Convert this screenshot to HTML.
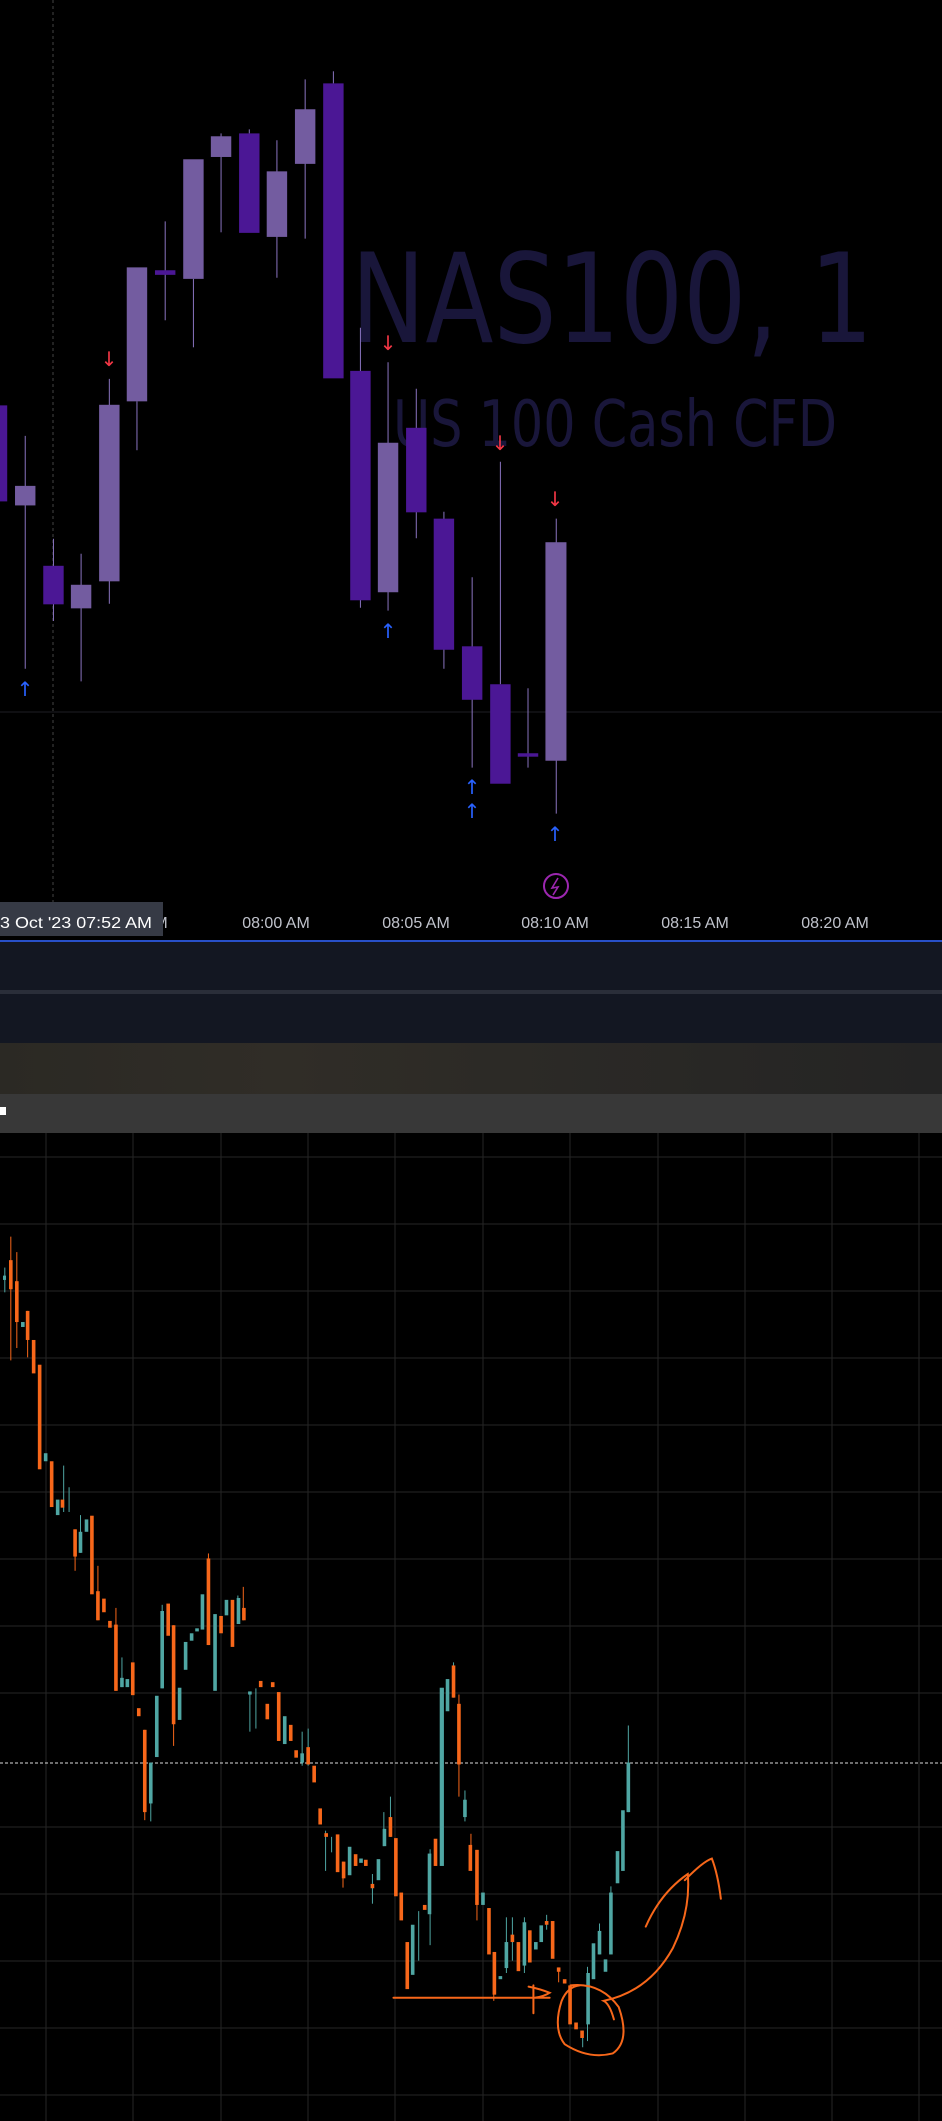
<!DOCTYPE html>
<html><head><meta charset="utf-8"><style>
html,body{margin:0;padding:0;background:#000;}
body{width:942px;height:2121px;overflow:hidden;position:relative;font-family:"Liberation Sans",sans-serif;}
svg{position:absolute;left:0;top:0;}
.l{fill:#735ca0}.d{fill:#4b1795}.w{stroke:#8a74c0;stroke-width:1;vector-effect:non-scaling-stroke}
.o{fill:#f7671a}.t{fill:#4fa6a3}.wo{stroke:#f7671a;stroke-width:1;vector-effect:non-scaling-stroke}.wt{stroke:#4fa6a3;stroke-width:1;vector-effect:non-scaling-stroke}
.g{stroke:#262626;stroke-width:1}
</style></head><body>
<svg width="942" height="2121" viewBox="0 0 942 2121">
<rect x="0" y="0" width="942" height="940" fill="#000"/>
<!-- watermark -->
<text x="351" y="342" font-size="124" fill="#19163a" font-family="DejaVu Sans, Liberation Sans, sans-serif" textLength="522" lengthAdjust="spacingAndGlyphs">NAS100, 1</text>
<text x="393" y="446" font-size="64" fill="#19163a" font-family="DejaVu Sans, Liberation Sans, sans-serif" textLength="444" lengthAdjust="spacingAndGlyphs">US 100 Cash CFD</text>
<line x1="53" y1="0" x2="53" y2="902" stroke="#444" stroke-dasharray="3,3"/>
<line x1="0" y1="712" x2="942" y2="712" stroke="#1e1e24"/>
<g transform="scale(0.6007,0.575)">
<line class="w" x1="42" y1="758" x2="42" y2="1163"/><line class="w" x1="89" y1="937" x2="89" y2="1080"/>
<line class="w" x1="135" y1="963" x2="135" y2="1185"/><line class="w" x1="182" y1="659" x2="182" y2="1050"/>
<line class="w" x1="228" y1="698" x2="228" y2="783"/><line class="w" x1="275" y1="385" x2="275" y2="557"/>
<line class="w" x1="322" y1="485" x2="322" y2="604"/><line class="w" x1="368" y1="232" x2="368" y2="404"/>
<line class="w" x1="415" y1="225" x2="415" y2="232"/><line class="w" x1="461" y1="244" x2="461" y2="483"/>
<line class="w" x1="508" y1="138" x2="508" y2="415"/><line class="w" x1="555" y1="124" x2="555" y2="145"/>
<line class="w" x1="600" y1="570" x2="600" y2="1057"/><line class="w" x1="646" y1="630" x2="646" y2="1062"/>
<line class="w" x1="693" y1="676" x2="693" y2="936"/><line class="w" x1="739" y1="890" x2="739" y2="1163"/>
<line class="w" x1="786" y1="1004" x2="786" y2="1335"/><line class="w" x1="833" y1="803" x2="833" y2="1190"/>
<line class="w" x1="879" y1="1197" x2="879" y2="1335"/><line class="w" x1="926" y1="902" x2="926" y2="1415"/>
<rect class="d" x="0" y="705" width="12" height="167"/>
<rect class="l" x="25" y="845" width="34" height="34"/>
<rect class="d" x="72" y="984" width="34" height="67"/>
<rect class="l" x="118" y="1017" width="34" height="41"/>
<rect class="l" x="165" y="704" width="34" height="307"/>
<rect class="l" x="211" y="465" width="34" height="233"/>
<rect class="d" x="258" y="470" width="34" height="8"/>
<rect class="l" x="305" y="277" width="34" height="208"/>
<rect class="l" x="351" y="237" width="34" height="36"/>
<rect class="d" x="398" y="232" width="34" height="173"/>
<rect class="l" x="444" y="298" width="34" height="114"/>
<rect class="l" x="491" y="190" width="34" height="95"/>
<rect class="d" x="538" y="145" width="34" height="513"/>
<rect class="d" x="583" y="645" width="34" height="399"/>
<rect class="l" x="629" y="770" width="34" height="260"/>
<rect class="d" x="676" y="744" width="34" height="147"/>
<rect class="d" x="722" y="902" width="34" height="228"/>
<rect class="d" x="769" y="1124" width="34" height="93"/>
<rect class="d" x="816" y="1190" width="34" height="173"/>
<rect class="d" x="862" y="1310" width="34" height="6"/>
<rect class="l" x="908" y="943" width="35" height="380"/>
</g>
<g font-size="20" font-family="DejaVu Sans, sans-serif" text-anchor="middle">
<text x="109" y="366" fill="#f23645">↓</text><text x="388" y="350" fill="#f23645">↓</text>
<text x="500" y="450" fill="#f23645">↓</text><text x="555" y="506" fill="#f23645">↓</text>
<text x="25" y="696" fill="#2962ff">↑</text><text x="388" y="638" fill="#2962ff">↑</text>
<text x="472" y="794" fill="#2962ff">↑</text><text x="472" y="818" fill="#2962ff">↑</text>
<text x="555" y="841" fill="#2962ff">↑</text>
</g>
<circle cx="556" cy="886" r="12" fill="none" stroke="#9c27b0" stroke-width="2"/>
<path d="M558 878 L552 888 L558 887 L553 895" fill="none" stroke="#9c27b0" stroke-width="1.6"/>
<!-- time axis -->
<g font-size="16" fill="#c0c3cc" text-anchor="middle">
<text x="276" y="928">08:00 AM</text><text x="416" y="928">08:05 AM</text><text x="555" y="928">08:10 AM</text>
<text x="695" y="928">08:15 AM</text><text x="835" y="928">08:20 AM</text><text x="946" y="928">0</text>
<text x="161" y="928">M</text>
</g>
<rect x="0" y="902" width="163" height="34" fill="#363a45"/>
<text x="0" y="928" font-size="16" fill="#ffffff" textLength="152" lengthAdjust="spacingAndGlyphs">3 Oct '23   07:52 AM</text>
<!-- panels -->
<rect x="0" y="940" width="942" height="2" fill="#2850c8"/>
<rect x="0" y="942" width="942" height="48" fill="#131722"/>
<rect x="0" y="990" width="942" height="4" fill="#2a2e39"/>
<rect x="0" y="994" width="942" height="49" fill="#131722"/>
<defs><linearGradient id="gr" x1="0" x2="1"><stop offset="0" stop-color="#2b2924"/><stop offset="0.3" stop-color="#302d27"/><stop offset="1" stop-color="#242424"/></linearGradient></defs>
<rect x="0" y="1043" width="942" height="51" fill="url(#gr)"/>
<rect x="0" y="1094" width="942" height="39" fill="#383838"/>
<rect x="0" y="1107" width="6" height="8" fill="#fff"/>
<rect x="0" y="1133" width="942" height="988" fill="#000"/>
<!-- grid -->
<g class="g">
<line x1="46" y1="1133" x2="46" y2="2121"/><line x1="133" y1="1133" x2="133" y2="2121"/><line x1="221" y1="1133" x2="221" y2="2121"/>
<line x1="308" y1="1133" x2="308" y2="2121"/><line x1="395" y1="1133" x2="395" y2="2121"/><line x1="483" y1="1133" x2="483" y2="2121"/>
<line x1="570" y1="1133" x2="570" y2="2121"/><line x1="658" y1="1133" x2="658" y2="2121"/><line x1="745" y1="1133" x2="745" y2="2121"/>
<line x1="832" y1="1133" x2="832" y2="2121"/><line x1="919" y1="1133" x2="919" y2="2121"/>
<line x1="0" y1="1157" x2="942" y2="1157"/><line x1="0" y1="1224" x2="942" y2="1224"/><line x1="0" y1="1291" x2="942" y2="1291"/>
<line x1="0" y1="1358" x2="942" y2="1358"/><line x1="0" y1="1425" x2="942" y2="1425"/><line x1="0" y1="1492" x2="942" y2="1492"/>
<line x1="0" y1="1559" x2="942" y2="1559"/><line x1="0" y1="1626" x2="942" y2="1626"/><line x1="0" y1="1693" x2="942" y2="1693"/>
<line x1="0" y1="1827" x2="942" y2="1827"/><line x1="0" y1="1894" x2="942" y2="1894"/><line x1="0" y1="1961" x2="942" y2="1961"/>
<line x1="0" y1="2028" x2="942" y2="2028"/><line x1="0" y1="2095" x2="942" y2="2095"/>
</g>
<line x1="0" y1="1763" x2="942" y2="1763" stroke="#ddd" stroke-dasharray="3,2"/>
<g transform="translate(0,1150) scale(0.6007,0.6188)">
<line class="wt" x1="8" y1="190" x2="8" y2="230"/><line class="wo" x1="18" y1="140" x2="18" y2="340"/>
<line class="wo" x1="28" y1="165" x2="28" y2="320"/><line class="wo" x1="46" y1="260" x2="46" y2="335"/>
<line class="wt" x1="106" y1="510" x2="106" y2="585"/><line class="wt" x1="115" y1="545" x2="115" y2="585"/>
<line class="wo" x1="125" y1="613" x2="125" y2="680"/><line class="wt" x1="134" y1="590" x2="134" y2="651"/>
<line class="wo" x1="163" y1="672" x2="163" y2="760"/><line class="wo" x1="193" y1="740" x2="193" y2="874"/>
<line class="wt" x1="203" y1="820" x2="203" y2="868"/><line class="wo" x1="241" y1="937" x2="241" y2="1083"/>
<line class="wt" x1="251" y1="990" x2="251" y2="1085"/><line class="wt" x1="270" y1="735" x2="270" y2="870"/>
<line class="wo" x1="289" y1="768" x2="289" y2="963"/><line class="wo" x1="347" y1="652" x2="347" y2="800"/>
<line class="wt" x1="396" y1="720" x2="396" y2="766"/><line class="wo" x1="405" y1="706" x2="405" y2="760"/>
<line class="wt" x1="416" y1="875" x2="416" y2="940"/><line class="wt" x1="426" y1="870" x2="426" y2="935"/>
<line class="wt" x1="503" y1="940" x2="503" y2="995"/><line class="wt" x1="513" y1="935" x2="513" y2="995"/>
<line class="wt" x1="542" y1="1100" x2="542" y2="1165"/><line class="wt" x1="552" y1="1110" x2="552" y2="1135"/>
<line class="wo" x1="571" y1="1150" x2="571" y2="1192"/><line class="wt" x1="620" y1="1170" x2="620" y2="1218"/>
<line class="wt" x1="639" y1="1070" x2="639" y2="1125"/><line class="wt" x1="650" y1="1045" x2="650" y2="1110"/>
<line class="wt" x1="697" y1="1230" x2="697" y2="1310"/><line class="wt" x1="716" y1="1130" x2="716" y2="1285"/>
<line class="wt" x1="755" y1="828" x2="755" y2="885"/><line class="wo" x1="764" y1="880" x2="764" y2="1045"/>
<line class="wt" x1="774" y1="1035" x2="774" y2="1085"/><line class="wo" x1="784" y1="1105" x2="784" y2="1165"/>
<line class="wo" x1="794" y1="1131" x2="794" y2="1245"/><line class="wo" x1="822" y1="1296" x2="822" y2="1375"/>
<line class="wt" x1="843" y1="1240" x2="843" y2="1330"/><line class="wt" x1="853" y1="1240" x2="853" y2="1310"/>
<line class="wt" x1="873" y1="1240" x2="873" y2="1330"/><line class="wt" x1="910" y1="1236" x2="910" y2="1260"/>
<line class="wo" x1="930" y1="1321" x2="930" y2="1345"/><line class="wt" x1="970" y1="1423" x2="970" y2="1450"/>
<line class="wt" x1="978" y1="1320" x2="978" y2="1440"/><line class="wt" x1="998" y1="1250" x2="998" y2="1300"/>
<line class="wt" x1="1017" y1="1190" x2="1017" y2="1300"/><line class="wt" x1="1046" y1="930" x2="1046" y2="1070"/>
<rect class="t" x="5" y="203" width="5" height="7"/><rect class="o" x="15" y="178" width="6" height="47"/>
<rect class="o" x="25" y="212" width="6" height="66"/><rect class="t" x="35" y="278" width="6" height="8"/>
<rect class="o" x="43" y="260" width="6" height="47"/><rect class="o" x="53" y="307" width="6" height="54"/>
<rect class="o" x="63" y="347" width="6" height="169"/><rect class="t" x="73" y="490" width="6" height="13"/>
<rect class="o" x="83" y="503" width="6" height="74"/><rect class="t" x="93" y="565" width="6" height="25"/>
<rect class="o" x="101" y="565" width="6" height="13"/><rect class="o" x="122" y="613" width="6" height="44"/>
<rect class="t" x="131" y="617" width="6" height="34"/><rect class="t" x="141" y="597" width="6" height="20"/>
<rect class="o" x="150" y="591" width="6" height="127"/><rect class="o" x="160" y="713" width="6" height="47"/>
<rect class="o" x="170" y="725" width="6" height="22"/><rect class="o" x="180" y="761" width="6" height="11"/>
<rect class="o" x="190" y="767" width="6" height="107"/><rect class="t" x="200" y="853" width="6" height="15"/>
<rect class="t" x="209" y="855" width="6" height="13"/><rect class="o" x="218" y="828" width="6" height="53"/>
<rect class="o" x="228" y="902" width="6" height="13"/><rect class="o" x="238" y="937" width="6" height="133"/>
<rect class="t" x="248" y="990" width="6" height="66"/><rect class="t" x="258" y="882" width="6" height="99"/>
<rect class="t" x="267" y="745" width="6" height="125"/><rect class="o" x="277" y="733" width="6" height="52"/>
<rect class="o" x="286" y="768" width="6" height="160"/><rect class="t" x="296" y="869" width="6" height="52"/>
<rect class="t" x="306" y="795" width="6" height="45"/><rect class="t" x="316" y="781" width="6" height="12"/>
<rect class="t" x="325" y="773" width="6" height="5"/><rect class="t" x="334" y="718" width="6" height="57"/>
<rect class="o" x="344" y="660" width="6" height="140"/><rect class="t" x="355" y="750" width="6" height="124"/>
<rect class="o" x="365" y="753" width="6" height="28"/><rect class="t" x="374" y="727" width="6" height="25"/>
<rect class="o" x="384" y="727" width="6" height="76"/><rect class="t" x="394" y="724" width="6" height="42"/>
<rect class="o" x="403" y="740" width="6" height="20"/><rect class="t" x="413" y="875" width="6" height="5"/>
<rect class="o" x="431" y="858" width="6" height="10"/><rect class="o" x="442" y="895" width="6" height="25"/>
<rect class="o" x="451" y="860" width="6" height="8"/><rect class="o" x="461" y="876" width="6" height="79"/>
<rect class="t" x="471" y="915" width="6" height="45"/><rect class="o" x="481" y="929" width="6" height="26"/>
<rect class="o" x="490" y="970" width="6" height="12"/><rect class="t" x="500" y="975" width="6" height="15"/>
<rect class="o" x="510" y="965" width="6" height="28"/><rect class="o" x="520" y="995" width="6" height="27"/>
<rect class="o" x="530" y="1064" width="6" height="26"/><rect class="o" x="540" y="1104" width="6" height="6"/>
<rect class="o" x="559" y="1106" width="6" height="61"/><rect class="o" x="569" y="1150" width="6" height="27"/>
<rect class="t" x="579" y="1126" width="6" height="46"/><rect class="o" x="589" y="1138" width="6" height="19"/>
<rect class="t" x="598" y="1145" width="6" height="7"/><rect class="o" x="606" y="1147" width="6" height="10"/>
<rect class="o" x="617" y="1186" width="6" height="7"/><rect class="t" x="627" y="1146" width="6" height="34"/>
<rect class="t" x="637" y="1097" width="6" height="28"/><rect class="o" x="647" y="1078" width="6" height="32"/>
<rect class="o" x="656" y="1112" width="6" height="94"/><rect class="o" x="665" y="1200" width="6" height="45"/>
<rect class="o" x="675" y="1280" width="6" height="76"/><rect class="t" x="684" y="1252" width="6" height="81"/>
<rect class="o" x="704" y="1220" width="6" height="8"/><rect class="t" x="712" y="1137" width="6" height="98"/>
<rect class="o" x="722" y="1113" width="6" height="44"/><rect class="t" x="732" y="869" width="7" height="288"/>
<rect class="t" x="742" y="855" width="6" height="52"/><rect class="o" x="752" y="833" width="6" height="52"/>
<rect class="o" x="761" y="895" width="6" height="98"/><rect class="t" x="771" y="1050" width="6" height="28"/>
<rect class="o" x="780" y="1123" width="6" height="42"/><rect class="o" x="791" y="1131" width="6" height="89"/>
<rect class="t" x="801" y="1200" width="6" height="20"/><rect class="o" x="811" y="1225" width="6" height="75"/>
<rect class="o" x="820" y="1296" width="6" height="69"/><rect class="t" x="830" y="1335" width="6" height="5"/>
<rect class="t" x="840" y="1280" width="6" height="42"/><rect class="o" x="850" y="1268" width="6" height="12"/>
<rect class="o" x="860" y="1280" width="6" height="47"/><rect class="t" x="870" y="1248" width="6" height="70"/>
<rect class="o" x="879" y="1261" width="6" height="52"/><rect class="t" x="889" y="1280" width="6" height="12"/>
<rect class="t" x="898" y="1253" width="6" height="27"/><rect class="o" x="907" y="1246" width="6" height="6"/>
<rect class="o" x="917" y="1246" width="6" height="61"/><rect class="o" x="927" y="1321" width="6" height="7"/>
<rect class="o" x="937" y="1340" width="6" height="7"/><rect class="o" x="946" y="1350" width="6" height="63"/>
<rect class="o" x="956" y="1410" width="6" height="11"/><rect class="o" x="966" y="1423" width="6" height="12"/>
<rect class="t" x="976" y="1330" width="6" height="83"/><rect class="t" x="985" y="1282" width="6" height="58"/>
<rect class="t" x="995" y="1262" width="6" height="38"/><rect class="t" x="1005" y="1308" width="6" height="20"/>
<rect class="t" x="1014" y="1200" width="6" height="100"/><rect class="t" x="1025" y="1133" width="6" height="52"/>
<rect class="t" x="1034" y="1067" width="6" height="98"/><rect class="t" x="1043" y="990" width="6" height="80"/>
<g fill="none" stroke="#f7671a" stroke-width="2" vector-effect="non-scaling-stroke" stroke-linecap="round">
<path vector-effect="non-scaling-stroke" d="M655 1370 L915 1370 M880 1352 Q900 1356 915 1362 Q905 1368 890 1370 M888 1350 L888 1395"/>
<path vector-effect="non-scaling-stroke" d="M950 1350 Q1000 1345 1030 1385 Q1050 1440 1020 1460 Q980 1470 940 1445 Q920 1420 935 1375 Q945 1352 965 1350"/>
<path vector-effect="non-scaling-stroke" d="M1022 1405 Q1015 1380 1005 1375 Q1080 1360 1120 1290 Q1150 1230 1145 1170 Q1100 1200 1075 1255 M1140 1180 Q1170 1150 1185 1145 Q1195 1170 1200 1210"/>
</g>
</g>
</svg>
</body></html>
